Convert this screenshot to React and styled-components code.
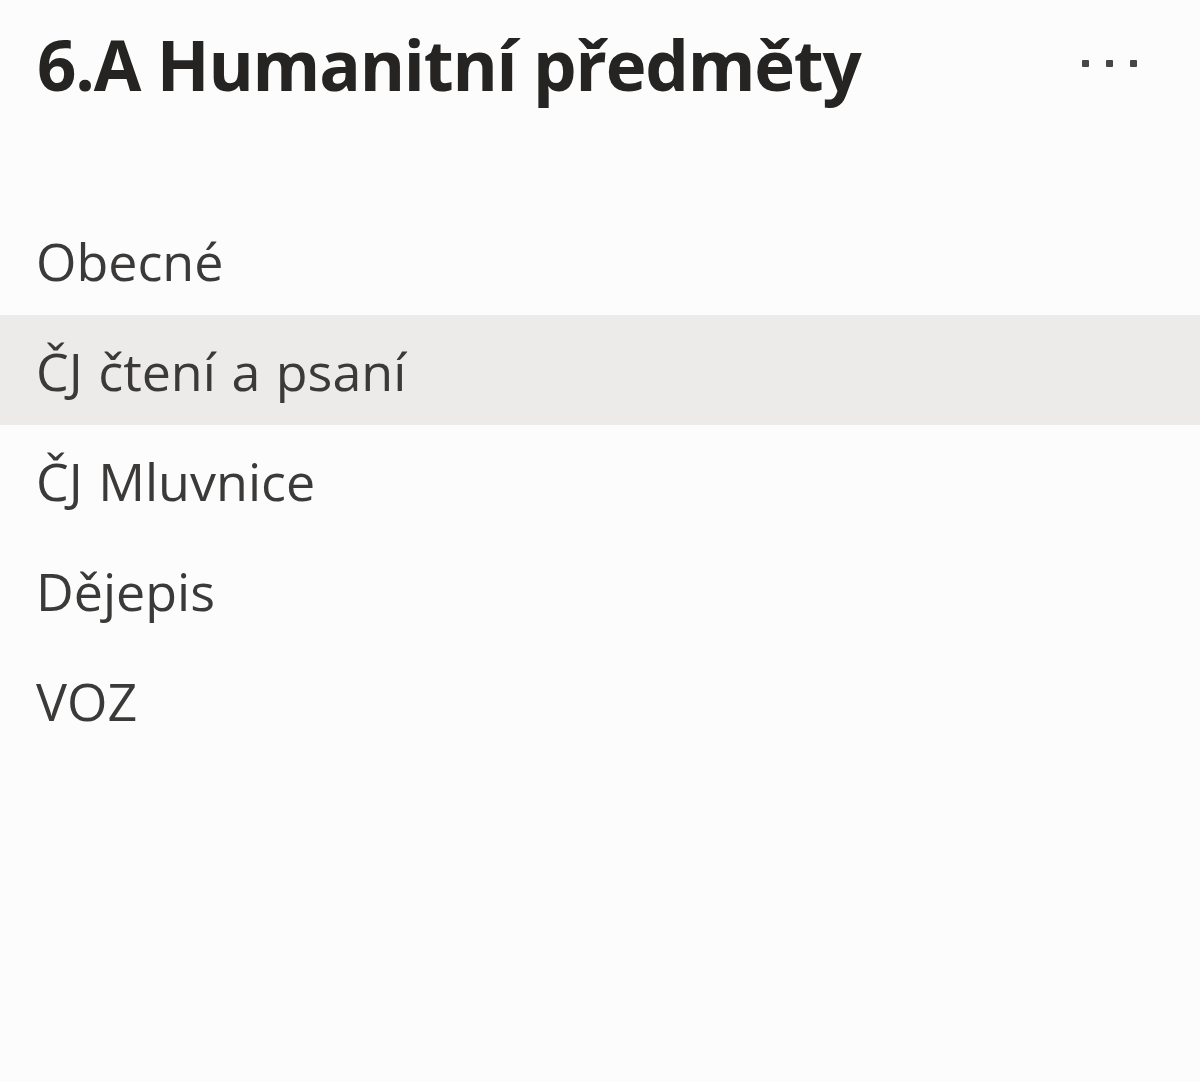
import React from "react";
import styled, { createGlobalStyle } from "styled-components";

const Global = createGlobalStyle`
  html, body { margin: 0; padding: 0; background: #fcfcfc; }
  body { font-family: "Open Sans", "Noto Sans", sans-serif; }
`;

const Page = styled.div`
  width: 1200px;
  height: 1082px;
  background: #fcfcfc;
  display: flex;
  flex-direction: column;
  overflow: hidden;
`;

const Header = styled.div`
  display: flex;
  align-items: flex-start;
  justify-content: space-between;
  padding: 14px 63px 0 37px;
  height: 187px;
  box-sizing: border-box;
`;

const Title = styled.h1`
  margin: 0;
  font-size: 69px;
  font-weight: 700;
  color: #252423;
  line-height: 100px;
  letter-spacing: -1.2px;
`;

const More = styled.div`
  display: flex;
  gap: 17px;
  padding-top: 46px;
`;

const Dot = styled.span`
  width: 7px;
  height: 7px;
  border-radius: 1px;
  background: #484644;
`;

const List = styled.div`
  display: flex;
  flex-direction: column;
  padding-top: 18px;
`;

const Row = styled.div`
  height: 110px;
  display: flex;
  align-items: center;
  padding-left: 36px;
  background: ${(p) => (p.$active ? "#edebe9" : "transparent")};
  font-size: 52px;
  word-spacing: 2px;
  color: #3b3a39;
  font-weight: 400;
`;

const channels = ["Obecné", "ČJ čtení a psaní", "ČJ Mluvnice", "Dějepis", "VOZ"];

export default function App() {
  return (
    <Page>
      <Global />
      <Header>
        <Title>6.A Humanitní předměty</Title>
        <More>
          <Dot />
          <Dot />
          <Dot />
        </More>
      </Header>
      <List>
        {channels.map((c, i) => (
          <Row key={c} $active={i === 1}>{c}</Row>
        ))}
      </List>
    </Page>
  );
}
